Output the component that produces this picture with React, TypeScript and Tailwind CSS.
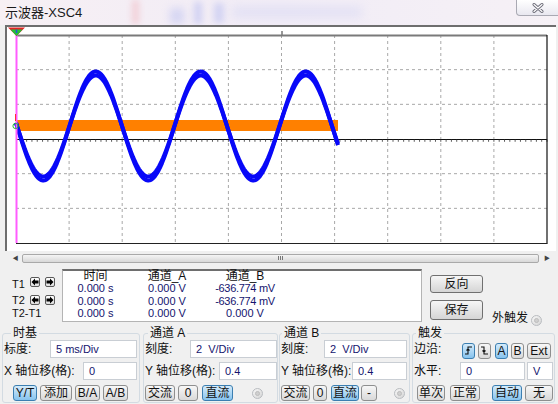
import React from "react";
import clsx from "clsx";

const FONT = "font-['Liberation_Sans','Noto_Sans_CJK_SC',sans-serif]";

// sine trace points (page coordinates, svg uses matching viewBox)
function sinePath(amp: number) {
  const pts: string[] = [];
  for (let x = 16; x <= 338; x += 1) {
    const y = 126 + amp * Math.sin((2 * Math.PI * (x - 17)) / 105);
    pts.push(`${x},${y.toFixed(1)}`);
  }
  return "M" + pts.join(" L");
}

function Scope() {
  const vx = Array.from({ length: 9 }, (_, i) => 16 + 53.1 * (i + 1));
  const hy = [1, 2, 4, 5].map((j) => 35 + 34.67 * j);
  const ticks = Array.from({ length: 100 }, (_, i) => 16 + 5.31 * (i + 1));
  return (
    <svg width={549} height={224} viewBox="7 27 549 224" className="block">
      {vx.map((x) => (
        <line key={x} x1={x} y1={35} x2={x} y2={243} stroke="#a8a8a8" strokeWidth={1} strokeDasharray="3 3" />
      ))}
      {hy.map((y) => (
        <line key={y} x1={16} y1={y} x2={547} y2={y} stroke="#a8a8a8" strokeWidth={1} strokeDasharray="3 3" />
      ))}
      <line x1={16} y1={139.5} x2={547} y2={139.5} stroke="#111" strokeWidth={1.2} />
      {ticks.map((x) => (
        <line key={x} x1={x} y1={139.5} x2={x} y2={141.8} stroke="#333" strokeWidth={0.8} />
      ))}
      <line x1={282} y1={31} x2={282} y2={35} stroke="#333" strokeWidth={1} />
      {/* frame */}
      <line x1={16} y1={35.5} x2={547} y2={35.5} stroke="#7a7a7a" strokeWidth={2} />
      <line x1={547} y1={35} x2={547} y2={243.5} stroke="#111" strokeWidth={1.2} />
      <line x1={16} y1={243.5} x2={547.5} y2={243.5} stroke="#222" strokeWidth={1.2} />
      {/* channel B trace */}
      <rect x={16} y={120} width={322} height={11} fill="#ff8000" />
      {/* channel A trace */}
      <path d={sinePath(54.5)} fill="none" stroke="#0808f8" strokeWidth={4} strokeLinejoin="round" />
      <path d={sinePath(50.5)} fill="none" stroke="#0808f8" strokeWidth={4} strokeLinejoin="round" />
      {/* cursor */}
      <line x1={16.5} y1={30} x2={16.5} y2={243} stroke="#ff5cff" strokeWidth={2} />
      <polygon points="8,27.5 25,27.5 16.5,36" fill="#e42222" />
      <polygon points="10.5,29.5 22.5,29.5 16.5,36" fill="#22c03a" />
      <line x1={16.5} y1={29.5} x2={16.5} y2={33} stroke="#2a4ce0" strokeWidth={1.4} />
      <circle cx={15.5} cy={126} r={2.6} fill="none" stroke="#22c03a" strokeWidth={1} />
      <line x1={15.5} y1={114} x2={15.5} y2={121} stroke="#ff3030" strokeWidth={1} />
    </svg>
  );
}

function Btn({
  children,
  className,
  active,
}: {
  children: React.ReactNode;
  className: string;
  active?: boolean;
}) {
  return (
    <div
      className={clsx(
        "h-[16px] flex items-center justify-center rounded-[3px] border text-[12px] leading-none text-[#111]",
        active
          ? "border-[#3c7fb1] bg-linear-to-b from-[#d4ebfa] to-[#86c3ee]"
          : "border-[#8e8f8f] bg-linear-to-b from-[#f7f7f7] to-[#d9d9d9]",
        className
      )}
    >
      {children}
    </div>
  );
}

function Field({ children, className }: { children: React.ReactNode; className: string }) {
  return (
    <div
      className={clsx(
        "h-[18px] flex items-center pl-[5px] bg-white border border-[#c9ced4] text-[11px] text-[#14146e]",
        className
      )}
    >
      {children}
    </div>
  );
}

function Radio() {
  return (
    <div className="w-[11px] h-[11px] rounded-full border border-[#b9bcc0] bg-linear-to-br from-[#f7f7f7] to-[#d6d6d6] flex items-center justify-center">
      <div className="w-[5px] h-[5px] rounded-full bg-[#cfcfcf] border border-[#bdbdbd]" />
    </div>
  );
}

function ArrowBtn({ dir }: { dir: "l" | "r" }) {
  return (
    <div className="w-[10px] h-[10px] rounded-[2px] border border-[#5a5a5a] bg-linear-to-b from-[#ffffff] to-[#dedede] flex items-center justify-center">
      <svg width={8} height={8} viewBox="0 0 8 8">
        {dir === "l" ? (
          <polygon points="0.5,4 4,0.5 4,2.6 7.5,2.6 7.5,5.4 4,5.4 4,7.5" fill="#000" />
        ) : (
          <polygon points="7.5,4 4,0.5 4,2.6 0.5,2.6 0.5,5.4 4,5.4 4,7.5" fill="#000" />
        )}
      </svg>
    </div>
  );
}

function Group({ title, className, legendClass, children }: {
  title: string;
  className: string;
  legendClass: string;
  children: React.ReactNode;
}) {
  return (
    <fieldset className={clsx("h-[77px] border border-[#d3dbe2] rounded-[3px] shrink-0", className)}>
      <legend className={clsx("px-[2px] text-[12px] leading-[14px] text-[#111]", legendClass)}>{title}</legend>
      {children}
    </fieldset>
  );
}

function Edge({ rising }: { rising?: boolean }) {
  return (
    <svg width={9} height={9} viewBox="0 0 9 9">
      {rising ? (
        <path d="M1 8 H4 V1 H8 M2.5 4.5 L4 3 L5.5 4.5" fill="none" stroke="#111" strokeWidth={1.1} />
      ) : (
        <path d="M1 1 H4 V8 H8 M2.5 4.5 L4 6 L5.5 4.5" fill="none" stroke="#111" strokeWidth={1.1} />
      )}
    </svg>
  );
}

export default function App() {
  return (
    <div className={clsx("relative w-[558px] h-[404px] overflow-hidden bg-[#f0f0f0] text-[#111]", FONT)}>
      {/* title bar */}
      <div className="relative h-[25px] bg-linear-to-r from-[#f7f0f4] via-[#f1ecf6] to-[#f6f1f6] overflow-hidden">
        <div className="absolute left-[132px] top-[0px] w-[7px] h-[24px] bg-[#f0a2ac] opacity-40 blur-[3px]" />
        <div className="absolute left-[170px] top-[8px] w-[14px] h-[16px] bg-[#a9b2f0] opacity-40 blur-[4px]" />
        <div className="absolute left-[194px] top-[2px] w-[8px] h-[22px] bg-[#9ea8ee] opacity-40 blur-[3px]" />
        <div className="absolute left-[214px] top-[3px] w-[10px] h-[20px] bg-[#a6afef] opacity-40 blur-[3px]" />
        <div className="absolute left-[232px] top-[6px] w-[130px] h-[12px] bg-[#d0d2f3] opacity-40 blur-[5px]" />
        <div className="absolute left-[5px] top-[4px] text-[13px] leading-[17px] text-[#1a1a1a]">示波器-XSC4</div>
        <div className="absolute left-[516px] top-0 w-[44px] h-[16px] rounded-bl-[4px] border border-t-0 border-[#a9a9b3] bg-linear-to-b from-[#ffffff] to-[#e9e8f0] flex items-center justify-center">
          <svg width={12} height={10} viewBox="0 0 12 10">
            <path d="M2 1.5 L10 8.5 M10 1.5 L2 8.5" stroke="#6c6c78" strokeWidth={3} strokeLinecap="round" />
            <path d="M2 1.5 L10 8.5 M10 1.5 L2 8.5" stroke="#ffffff" strokeWidth={1.2} strokeLinecap="round" />
          </svg>
        </div>
      </div>

      {/* display */}
      <div className="ml-[5px] w-[551px] h-[226px] border-t-2 border-l-2 border-[#6e6e6e] bg-white">
        <Scope />
      </div>

      {/* scrollbar */}
      <div className="mt-[1px] h-[12px] ml-[9px] w-[546px] flex items-center">
        <div className="w-[13px] flex justify-center text-[6px] text-[#444]">◀</div>
        <div className="w-[517px] h-[9px] rounded-[2px] border border-[#a9a9a9] bg-linear-to-b from-[#f5f5f5] to-[#d8d8d8] flex items-center justify-center">
          <div className="flex gap-[1px]">
            <div className="w-[1px] h-[4px] bg-[#777]" />
            <div className="w-[1px] h-[4px] bg-[#777]" />
            <div className="w-[1px] h-[4px] bg-[#777]" />
          </div>
        </div>
        <div className="w-[16px] flex justify-center text-[6px] text-[#444]">▶</div>
      </div>

      {/* readout */}
      <div className="mt-[2px] h-[58px] flex">
        <div className="w-[62px] pl-[12px] text-[11px]">
          <div className="mt-[11px] h-[10px] flex items-center">
            <div className="w-[18px] leading-[10px] pt-[3px]">T1</div>
            <ArrowBtn dir="l" />
            <div className="w-[5px]" />
            <ArrowBtn dir="r" />
          </div>
          <div className="mt-[8px] h-[10px] flex items-center">
            <div className="w-[18px] leading-[10px]">T2</div>
            <ArrowBtn dir="l" />
            <div className="w-[5px]" />
            <ArrowBtn dir="r" />
          </div>
          <div className="mt-[1px] leading-[12px] pt-[1px]">T2-T1</div>
        </div>
        <div className="mt-[3px] w-[360px] h-[53px] bg-white border border-[#b4b4b4] border-t-2 border-t-[#6e6e6e]">
          <div className="grid grid-cols-[65px_78px_78px] text-center">
            <div className="h-[11px] leading-[11px] text-[12px]">时间</div>
            <div className="h-[11px] leading-[11px] text-[12px]">通道_A</div>
            <div className="h-[11px] leading-[11px] text-[12px]">通道_B</div>
          </div>
          <div className="grid grid-cols-[65px_78px_78px] text-center text-[11px] leading-[12.5px] text-[#14146e]">
            <div>0.000 s</div>
            <div>0.000 V</div>
            <div className="tracking-[-0.3px]">-636.774 mV</div>
            <div>0.000 s</div>
            <div>0.000 V</div>
            <div className="tracking-[-0.3px]">-636.774 mV</div>
            <div>0.000 s</div>
            <div>0.000 V</div>
            <div>0.000 V</div>
          </div>
        </div>
        <div className="ml-[8px] w-[53px]">
          <div className="mt-[9px] h-[18px] rounded-[3px] border border-[#707070] bg-linear-to-b from-[#f6f6f6] to-[#d5d5d5] flex items-center justify-center text-[12px]">
            反向
          </div>
          <div className="mt-[7px] h-[20px] rounded-[3px] border border-[#707070] bg-linear-to-b from-[#f6f6f6] to-[#d5d5d5] flex items-center justify-center text-[12px]">
            保存
          </div>
        </div>
        <div className="ml-[9px] mt-[45px] flex items-center h-[14px]">
          <div className="text-[12px] leading-[14px]">外触发</div>
          <div className="ml-[3px] mt-[5px]">
            <Radio />
          </div>
        </div>
      </div>

      {/* controls */}
      <div className="mt-[2px] flex text-[12px]">
        <Group title="时基" className="ml-[2px] w-[138px]" legendClass="ml-[8px]">
          <div className="h-[18px] flex items-center">
            <div className="w-[47px] pl-[1px]">标度:</div>
            <Field className="w-[87px]">5 ms/Div</Field>
          </div>
          <div className="mt-[4px] h-[18px] flex items-center">
            <div className="w-[80px] pl-[1px] whitespace-nowrap">X 轴位移(格):</div>
            <Field className="w-[54px]">0</Field>
          </div>
          <div className="mt-[5px] flex pl-[10px] gap-[3px]">
            <Btn className="w-[24px] text-[11px]" active>Y/T</Btn>
            <Btn className="w-[32px]">添加</Btn>
            <Btn className="w-[25px] text-[11px]">B/A</Btn>
            <Btn className="w-[25px] text-[11px]">A/B</Btn>
          </div>
        </Group>

        <Group title="通道 A" className="ml-[3px] w-[135px]" legendClass="ml-[4px]">
          <div className="h-[18px] flex items-center">
            <div className="w-[46px] pl-[1px]">刻度:</div>
            <Field className="w-[87px]">2&nbsp;&nbsp;V/Div</Field>
          </div>
          <div className="mt-[4px] h-[18px] flex items-center">
            <div className="w-[75px] pl-[1px] whitespace-nowrap">Y 轴位移(格):</div>
            <Field className="w-[58px]">0.4</Field>
          </div>
          <div className="mt-[5px] flex items-center pl-[1px]">
            <Btn className="w-[30px]">交流</Btn>
            <Btn className="ml-[3px] w-[20px] text-[11px]">0</Btn>
            <Btn className="ml-[4px] w-[31px]" active>直流</Btn>
            <div className="ml-[19px]">
              <Radio />
            </div>
          </div>
        </Group>

        <Group title="通道 B" className="ml-[1px] w-[131px]" legendClass="ml-[2px]">
          <div className="h-[18px] flex items-center">
            <div className="w-[44px] pl-[1px]">刻度:</div>
            <Field className="w-[83px]">2&nbsp;&nbsp;V/Div</Field>
          </div>
          <div className="mt-[4px] h-[18px] flex items-center">
            <div className="w-[72px] pl-[1px] whitespace-nowrap">Y 轴位移(格):</div>
            <Field className="w-[55px]">0.4</Field>
          </div>
          <div className="mt-[5px] flex items-center pl-[1px]">
            <Btn className="w-[29px]">交流</Btn>
            <Btn className="ml-[3px] w-[14px] text-[11px]">0</Btn>
            <Btn className="ml-[4px] w-[28px]" active>直流</Btn>
            <Btn className="ml-[2px] w-[16px] text-[11px]">-</Btn>
            <div className="ml-[17px]">
              <Radio />
            </div>
          </div>
        </Group>

        <Group title="触发" className="ml-[2px] w-[143px]" legendClass="ml-[3px]">
          <div className="h-[18px] flex items-center">
            <div className="w-[49px] pl-[1px]">边沿:</div>
            <div className="mt-[3px] flex items-center">
              <Btn className="w-[13px] h-[14px]" active>
                <Edge rising />
              </Btn>
              <Btn className="ml-[3px] w-[13px] h-[14px]">
                <Edge />
              </Btn>
              <Btn className="ml-[4px] w-[13px] h-[14px] text-[11px]" active>A</Btn>
              <Btn className="ml-[3px] w-[13px] h-[14px] text-[11px]">B</Btn>
              <Btn className="ml-[3px] w-[24px] h-[14px] text-[11px]">Ext</Btn>
            </div>
          </div>
          <div className="mt-[4px] h-[18px] flex items-center">
            <div className="w-[47px] pl-[1px]">水平:</div>
            <Field className="w-[65px]">0</Field>
            <Field className="ml-[2px] w-[26px]">V</Field>
          </div>
          <div className="mt-[5px] flex items-center pl-[4px]">
            <Btn className="w-[28px]">单次</Btn>
            <Btn className="ml-[5px] w-[30px]">正常</Btn>
            <Btn className="ml-[12px] w-[30px]" active>自动</Btn>
            <Btn className="ml-[3px] w-[28px]">无</Btn>
          </div>
        </Group>
      </div>
    </div>
  );
}
